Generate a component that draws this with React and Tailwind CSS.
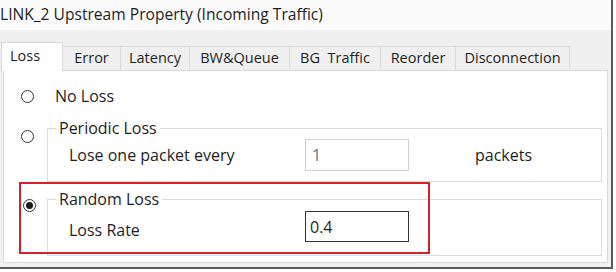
import React from 'react';

const tabs = [
  { label: 'Loss', w: 'w-[62px]', active: true },
  { label: 'Error', w: 'w-[58px]' },
  { label: 'Latency', w: 'w-[69px]' },
  { label: 'BW&Queue', w: 'w-[100px]' },
  { label: 'BG\u00a0 Traffic', w: 'w-[91px]' },
  { label: 'Reorder', w: 'w-[75px]' },
  { label: 'Disconnection', w: 'w-[114px]' },
];

function Radio({ checked, className = '' }) {
  return (
    <div
      className={`w-[13px] h-[13px] shrink-0 rounded-full border border-[#333] bg-white flex items-center justify-center ${className}`}
    >
      {checked && <div className="w-[7px] h-[7px] rounded-full bg-[#1a1a1a]" />}
    </div>
  );
}

function GroupBox({ title, className = '', children }) {
  return (
    <div className={`relative w-[555px] border border-[#dcdcdc] ${className}`}>
      <span className="absolute -top-[11px] left-[8px] bg-white px-[3px] leading-[20px]">{title}</span>
      {children}
    </div>
  );
}

export default function App() {
  return (
    <div
      className="w-[616px] h-[272px] bg-white text-[#1e1e1e] overflow-hidden"
      style={{ fontFamily: '"Open Sans", "Noto Sans", sans-serif' }}
    >
      <div className="w-[613px] h-[269px] border-r-2 border-b-2 border-[#5a5a5a] bg-[#f0f0f0] flex flex-col">
        {/* Title */}
        <div className="h-[30px] bg-[#fafafa] flex items-center text-[15.6px] whitespace-nowrap">
          <span>LINK_2 Upstream Property (Incoming Traffic)</span>
        </div>

        {/* Tabs */}
        <div className="flex items-end pl-[1px] mt-[12px] text-[14.5px] leading-none relative z-10">
          {tabs.map((t) =>
            t.active ? (
              <div
                key={t.label}
                className={`${t.w} h-[29px] -mb-[1px] bg-white border-l border-t border-r border-[#d9d9d9] flex items-center pl-[8px] pb-[2px]`}
              >
                {t.label}
              </div>
            ) : (
              <div
                key={t.label}
                className={`${t.w} h-[24px] bg-[#f0f0f0] border-t border-r border-[#d9d9d9] flex items-center justify-center whitespace-nowrap`}
              >
                {t.label}
              </div>
            )
          )}
        </div>

        {/* Panel */}
        <div className="relative ml-[3px] w-[605px] h-[193px] bg-white border border-[#d9d9d9] pl-[17px] pt-[15px] text-[16px]">
          <div className="flex items-center h-[20px]">
            <Radio />
            <span className="ml-[21px]">No Loss</span>
          </div>

          <div className="flex items-start mt-[22px]">
            <Radio className="mt-[2px]" />
            <GroupBox title="Periodic Loss" className="ml-[13px] pl-[21px] py-[10px]">
              <div className="flex items-center">
                <span className="w-[236px]">Lose one packet every</span>
                <div className="w-[104px] h-[32px] border border-[#cfcfcf] bg-white flex items-center pl-[6px] text-[#707070]">
                  1
                </div>
                <span className="ml-[66px]">packets</span>
              </div>
            </GroupBox>
          </div>

          <div className="flex items-start mt-[17px]">
            <Radio checked className="ml-[2px]" />
            <GroupBox title="Random Loss" className="ml-[11px] pl-[21px] pt-[11px] pb-[13px]">
              <div className="flex items-center">
                <span className="w-[236px] mt-[6px]">Loss Rate</span>
                <div className="w-[104px] h-[31px] border border-[#333] bg-white flex items-center pl-[4px]">
                  0.4
                </div>
              </div>
            </GroupBox>
          </div>

          {/* highlight annotation */}
          <div className="absolute left-[15px] top-[111px] w-[411px] h-[72px] border-2 border-[#d8202c] pointer-events-none" />
        </div>
      </div>
    </div>
  );
}
